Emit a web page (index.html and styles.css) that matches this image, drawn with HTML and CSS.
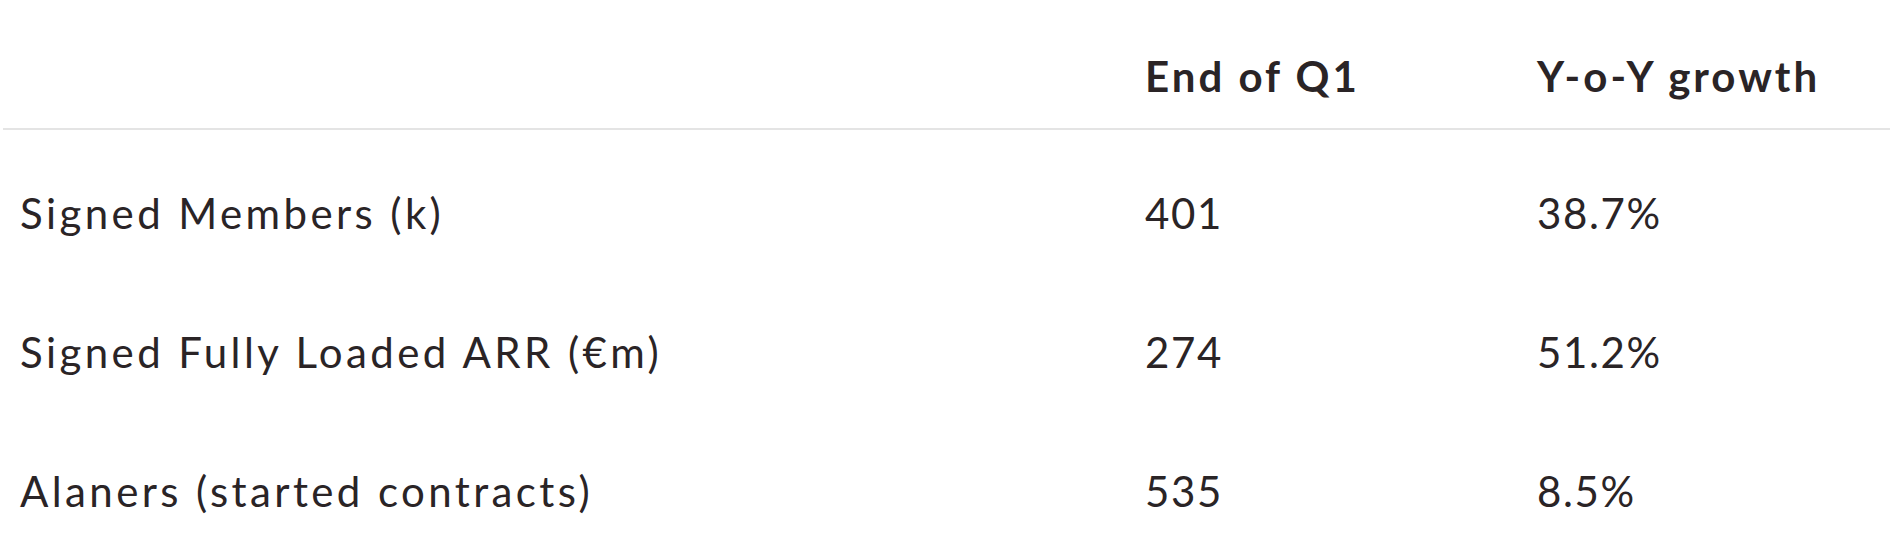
FILE: index.html
```html
<!DOCTYPE html>
<html lang="en">
<head>
<meta charset="utf-8">
<title>Q1 key metrics</title>
<link rel="stylesheet" href="styles.css">
</head>
<body>
<div class="wrap">
  <table class="metrics">
    <colgroup>
      <col class="c-label">
      <col class="c-value">
      <col class="c-growth">
    </colgroup>
    <thead>
      <tr>
        <th></th>
        <th>End of Q1</th>
        <th>Y-o-Y growth</th>
      </tr>
    </thead>
    <tbody>
      <tr>
        <td class="label">Signed Members (k)</td>
        <td class="num">401</td>
        <td class="num">38.7%</td>
      </tr>
      <tr>
        <td class="label">Signed Fully Loaded ARR (€m)</td>
        <td class="num">274</td>
        <td class="num">51.2%</td>
      </tr>
      <tr>
        <td class="label">Alaners (started contracts)</td>
        <td class="num">535</td>
        <td class="num">8.5%</td>
      </tr>
    </tbody>
  </table>
</div>
</body>
</html>
```

FILE: styles.css
```css
html, body {
  margin: 0;
  padding: 0;
  background: #ffffff;
}

.wrap {
  padding-left: 3px;
}

.metrics {
  width: 100%;
  border-collapse: collapse;
  table-layout: fixed;
  font-family: "Lato", "Liberation Sans", sans-serif;
  color: #2a2426;
  font-size: 42px;
  line-height: 50px;
}

.c-label { width: 1125px; }
.c-value { width: 392px; }

.metrics th,
.metrics td {
  text-align: left;
  padding: 0 0 0 17px;
  white-space: nowrap;
}

.metrics thead th {
  font-weight: 700;
  letter-spacing: 3px;
  padding-top: 51px;
  padding-bottom: 27px;
  border-bottom: 2px solid #e4e4e4;
}

.metrics tbody td {
  font-weight: 400;
  padding-top: 58px;
  padding-bottom: 31px;
}

.metrics .label {
  letter-spacing: 3.4px;
}

.metrics .num {
  letter-spacing: 1.6px;
}
```
